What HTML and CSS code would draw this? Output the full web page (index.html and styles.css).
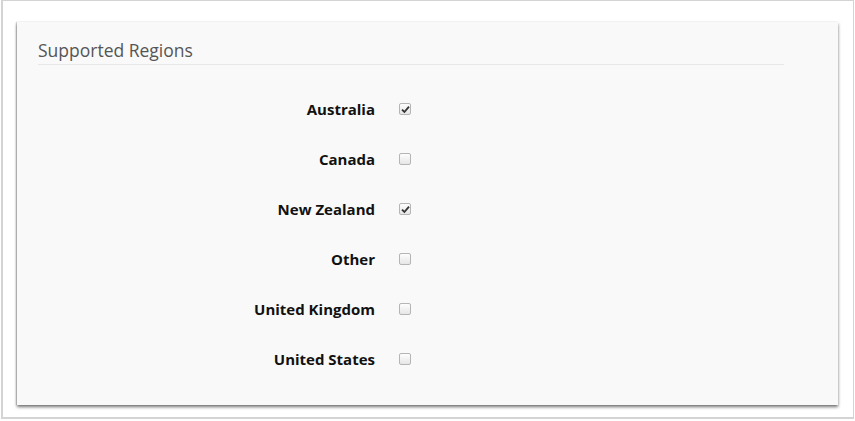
FILE: index.html
```html
<!DOCTYPE html>
<html>
<head>
  <title>Supported Regions</title>
  <meta name="viewport" content="width=device-width, initial-scale=1.0">
  <link rel="stylesheet" href="styles.css">
</head>
<body>
  <div class="frame">
    <div class="panel">
      <h2 class="panel-title">Supported Regions</h2>

      <div class="region-list">
        <div class="region-row">
          <span class="region-name">Australia</span>
          <span class="check checked">
            <svg width="9" height="9" viewBox="0 0 9 9"><path d="M1 4.6 L3.4 7 L8 1.6" fill="none" stroke="#333" stroke-width="1.8"/></svg>
          </span>
        </div>
        <div class="region-row">
          <span class="region-name">Canada</span>
          <span class="check"></span>
        </div>
        <div class="region-row">
          <span class="region-name">New Zealand</span>
          <span class="check checked">
            <svg width="9" height="9" viewBox="0 0 9 9"><path d="M1 4.6 L3.4 7 L8 1.6" fill="none" stroke="#333" stroke-width="1.8"/></svg>
          </span>
        </div>
        <div class="region-row">
          <span class="region-name">Other</span>
          <span class="check"></span>
        </div>
        <div class="region-row">
          <span class="region-name">United Kingdom</span>
          <span class="check"></span>
        </div>
        <div class="region-row">
          <span class="region-name">United States</span>
          <span class="check"></span>
        </div>
      </div>
    </div>
  </div>
</body>
</html>
```

FILE: styles.css
```css
body {
  margin: 0;
  font-family: 'Open Sans', 'Liberation Sans', sans-serif;
  background-color: #fff;
}
.frame {
  box-sizing: border-box;
  width: 853px;
  height: 419px;
  margin-left: 1px;
  padding: 21px 15px 0 14px;
  border: 1px solid #d4d4d4;
  border-left-width: 2px;
  border-bottom-width: 2px;
  background-color: #fff;
}
.panel {
  box-sizing: border-box;
  width: 821px;
  height: 383px;
  padding: 16px 54px 0 21px;
  background-color: #f9f9f9;
  box-shadow: 0 2px 3px rgba(0,0,0,0.55), -1px 0 1px rgba(0,0,0,0.15);
}
.panel-title {
  margin: 0;
  padding-bottom: 1px;
  font-size: 17.5px;
  font-weight: normal;
  line-height: 25px;
  color: #555;
  border-bottom: 1px solid #e8e8e8;
}
.region-list {
  margin-top: 19px;
}
.region-row {
  display: flex;
  align-items: center;
  height: 50px;
}
.region-name {
  width: 337px;
  text-align: right;
  font-size: 15px;
  font-weight: bold;
  color: #111;
}
.check {
  box-sizing: border-box;
  display: flex;
  align-items: center;
  justify-content: center;
  width: 12px;
  height: 12px;
  margin-left: 24px;
  border: 1px solid #b5b5b5;
  border-radius: 2px;
  background: linear-gradient(#fdfdfd, #e6e6e6);
}
```
